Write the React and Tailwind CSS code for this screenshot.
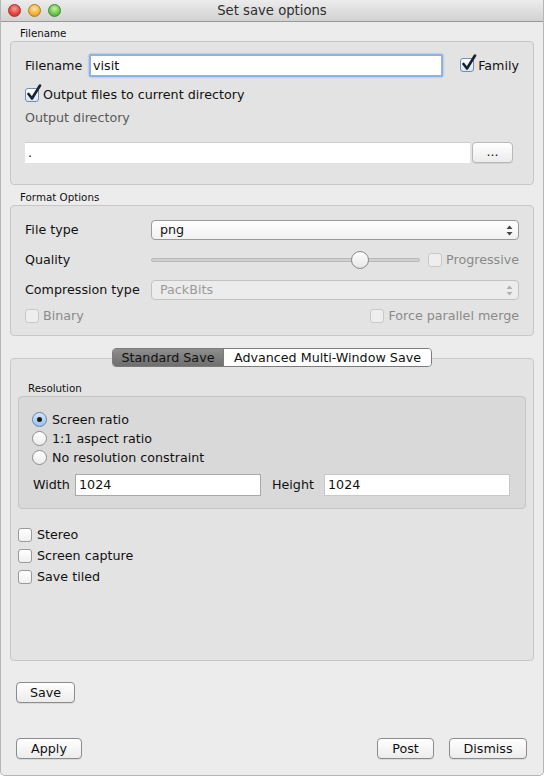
import React from 'react';

const font = { fontFamily: '"DejaVu Sans", "Liberation Sans", sans-serif' };

function Light({ color, ring }) {
  return (
    <span
      className="inline-block w-[13px] h-[13px] rounded-full border"
      style={{ background: color, borderColor: ring }}
    />
  );
}

function Check({ checked, disabled }) {
  return (
    <span className="relative inline-block w-[14px] h-[14px] shrink-0">
      <span
        className={`absolute inset-0 rounded-[3px] border ${
          disabled
            ? 'border-[#c8c8c8] bg-[#eeeeee]'
            : checked
            ? 'border-[#6f8fb8] bg-gradient-to-b from-[#ffffff] to-[#d9e6f5]'
            : 'border-[#9a9a9a] bg-gradient-to-b from-[#ffffff] to-[#f0f0f0]'
        }`}
      />
      {checked && (
        <svg className="absolute left-[1px] top-[-4px]" width="16" height="17" viewBox="0 0 16 17">
          <path d="M2.5 10 L6 14.5 L14 1.5" fill="none" stroke="#1a2230" strokeWidth="2.6" strokeLinecap="round" strokeLinejoin="round" />
        </svg>
      )}
    </span>
  );
}

function Radio({ checked }) {
  return (
    <span
      className={`relative inline-flex items-center justify-center w-[15px] h-[15px] rounded-full border shrink-0 ${
        checked
          ? 'border-[#5f86b8] bg-gradient-to-b from-[#d3e5f8] to-[#9cc2ec]'
          : 'border-[#8e8e8e] bg-gradient-to-b from-[#ffffff] to-[#ececec]'
      }`}
    >
      {checked && <span className="w-[5px] h-[5px] rounded-full bg-[#1b1b1b]" />}
    </span>
  );
}

function Arrows({ dim }) {
  const c = dim ? '#b0b0b0' : '#444';
  return (
    <svg width="7" height="11" viewBox="0 0 7 11">
      <path d="M3.5 0.5 L6.5 4 L0.5 4 Z" fill={c} />
      <path d="M3.5 10.5 L6.5 7 L0.5 7 Z" fill={c} />
    </svg>
  );
}

function Button({ children, className = '' }) {
  return (
    <div
      className={`h-[21px] flex items-center justify-center rounded-[4px] border border-[#8c8c8c] bg-gradient-to-b from-[#ffffff] to-[#ececec] text-[12.7px] text-[#111] shadow-[0_1px_0_rgba(0,0,0,0.08)] ${className}`}
    >
      {children}
    </div>
  );
}

function GroupLabel({ children, className = '' }) {
  return <div className={`h-[14px] flex items-center text-[10.3px] text-[#111] ${className}`}>{children}</div>;
}

export default function App() {
  return (
    <div style={font} className="w-[544px] h-[776px] bg-[#ececec] flex flex-col overflow-hidden rounded-b-[5px] border-x border-b border-[#b5b5b5]">
      {/* title bar */}
      <div className="relative h-[22px] shrink-0 flex items-center justify-center bg-gradient-to-b from-[#ececec] to-[#d2d2d2] border-b border-[#9a9a9a] rounded-t-[5px]">
        <div className="absolute left-[7px] top-[4px] flex gap-[7px]">
          <Light color="radial-gradient(circle at 50% 35%, #ff9a94, #e0443e 60%, #b8302b)" ring="#a8332d" />
          <Light color="radial-gradient(circle at 50% 35%, #ffe3a0, #f2b03a 60%, #c98a1e)" ring="#b07c22" />
          <Light color="radial-gradient(circle at 50% 35%, #c4f2a6, #69c34a 60%, #3f9330)" ring="#3e8a2f" />
        </div>
        <span className="text-[13.2px] text-[#2e2e2e]">Set save options</span>
      </div>

      <div className="flex flex-col px-[9px]">
        {/* Filename group */}
        <GroupLabel className="mt-[5px] pl-[10px]">Filename</GroupLabel>
        <div className="h-[144px] rounded-[4px] border border-[#c7c7c7] bg-[#e3e3e3] px-[14px] pt-[12px] flex flex-col">
          <div className="h-[23px] flex items-center">
            <span className="w-[64px] text-[12.7px] text-[#111]">Filename</span>
            <div className="w-[354px] h-[23px] rounded-[2px] border-2 border-[#8db2e3] bg-white flex items-center pl-[2px] text-[12.7px] text-[#111] shadow-[0_0_2px_#6d9bd8]">
              visit
            </div>
            <div className="ml-auto flex items-center gap-[4px]">
              <Check checked />
              <span className="text-[12.7px] text-[#111]">Family</span>
            </div>
          </div>
          <div className="h-[18px] mt-[9px] flex items-center gap-[4px]">
            <Check checked />
            <span className="text-[12.7px] text-[#111]">Output files to current directory</span>
          </div>
          <div className="h-[18px] mt-[5px] flex items-center text-[12.7px] text-[#5a5a5a]">Output directory</div>
          <div className="h-[22px] mt-[14px] flex items-center">
            <div className="w-[445px] h-[21px] bg-white border-t border-[#cfcfcf] flex items-center pl-[3px] text-[12.7px] text-[#111]">.</div>
            <Button className="ml-[2px] w-[41px] text-[#7a8aa0] border-[#b8b8b8]">...</Button>
          </div>
        </div>

        {/* Format Options */}
        <GroupLabel className="mt-[6px] pl-[10px]">Format Options</GroupLabel>
        <div className="h-[131px] rounded-[4px] border border-[#c7c7c7] bg-[#e3e3e3] pl-[14px] pr-[14px] pt-[14px] flex flex-col">
          <div className="h-[20px] flex items-center">
            <span className="w-[126px] text-[12.7px] text-[#111]">File type</span>
            <div className="flex-1 h-[20px] rounded-[4px] border border-[#9a9a9a] bg-gradient-to-b from-[#ffffff] to-[#f1f1f1] flex items-center justify-between pl-[8px] pr-[5px] text-[12.7px] text-[#111]">
              <span>png</span>
              <Arrows />
            </div>
          </div>
          <div className="h-[20px] mt-[10px] flex items-center">
            <span className="w-[126px] text-[12.7px] text-[#111]">Quality</span>
            <div className="relative w-[269px] h-[20px] flex items-center">
              <div className="w-full h-[4px] rounded-full bg-[#d0d0d0] border border-[#b9b9b9]" />
              <span className="absolute left-[200px] top-[1px] w-[18px] h-[18px] rounded-full border border-[#8a8a8a] bg-gradient-to-b from-[#ffffff] to-[#e6e6e6]" />
            </div>
            <div className="ml-auto flex items-center gap-[4px]">
              <Check disabled />
              <span className="text-[12.7px] text-[#8a8a8a]">Progressive</span>
            </div>
          </div>
          <div className="h-[20px] mt-[10px] flex items-center">
            <span className="w-[126px] text-[12.7px] text-[#111]">Compression type</span>
            <div className="flex-1 h-[20px] rounded-[4px] border border-[#c2c2c2] bg-[#ececec] flex items-center justify-between pl-[8px] pr-[5px] text-[12.7px] text-[#9a9a9a]">
              <span>PackBits</span>
              <Arrows dim />
            </div>
          </div>
          <div className="h-[18px] mt-[7px] flex items-center">
            <div className="flex items-center gap-[4px]">
              <Check disabled />
              <span className="text-[12.7px] text-[#8a8a8a]">Binary</span>
            </div>
            <div className="ml-auto flex items-center gap-[4px]">
              <Check disabled />
              <span className="text-[12.7px] text-[#8a8a8a]">Force parallel merge</span>
            </div>
          </div>
        </div>

        {/* Tabs */}
        <div className="relative mt-[12px] pt-[10px]">
          <div className="absolute left-0 right-0 top-0 flex justify-center z-10">
            <div className="flex h-[19px] rounded-[4px] border border-[#7c7c7c] overflow-hidden text-[12.7px]">
              <div className="w-[110px] flex items-center justify-center bg-gradient-to-b from-[#8e8e8e] to-[#6e6e6e] text-[#111]">Standard Save</div>
              <div className="w-[208px] flex items-center justify-center bg-white border-l border-[#7c7c7c] text-[#111]">Advanced Multi-Window Save</div>
            </div>
          </div>
          <div className="h-[303px] rounded-[4px] border border-[#c7c7c7] bg-[#e3e3e3] px-[7px] pt-[23px] flex flex-col">
            <GroupLabel className="pl-[10px]">Resolution</GroupLabel>
            <div className="h-[113px] rounded-[4px] border border-[#c4c4c4] bg-[#d9d9d9] pl-[13px] pr-[15px] pt-[13px] flex flex-col">
              <div className="h-[19px] flex items-center gap-[5px]">
                <Radio checked />
                <span className="text-[12.7px] text-[#111]">Screen ratio</span>
              </div>
              <div className="h-[19px] flex items-center gap-[5px]">
                <Radio />
                <span className="text-[12.7px] text-[#111]">1:1 aspect ratio</span>
              </div>
              <div className="h-[19px] flex items-center gap-[5px]">
                <Radio />
                <span className="text-[12.7px] text-[#111]">No resolution constraint</span>
              </div>
              <div className="h-[22px] mt-[7px] flex items-center">
                <span className="w-[43px] pl-[1px] text-[12.7px] text-[#111]">Width</span>
                <div className="w-[186px] h-[22px] bg-white border border-[#a8a8a8] flex items-center pl-[3px] text-[12.7px] text-[#111]">1024</div>
                <span className="ml-[11px] w-[52px] text-[12.7px] text-[#111]">Height</span>
                <div className="flex-1 h-[22px] bg-white border border-[#c8c8c8] flex items-center pl-[3px] text-[12.7px] text-[#111]">1024</div>
              </div>
            </div>
            <div className="mt-[15px] flex flex-col">
              {['Stereo', 'Screen capture', 'Save tiled'].map((t) => (
                <div key={t} className="h-[21px] flex items-center gap-[5px]">
                  <Check />
                  <span className="text-[12.7px] text-[#111]">{t}</span>
                </div>
              ))}
            </div>
          </div>
        </div>

        <div className="mt-[21px] pl-[6px]">
          <Button className="w-[59px]">Save</Button>
        </div>

        <div className="mt-[35px] flex items-center pl-[6px] pr-[7px]">
          <Button className="w-[66px]">Apply</Button>
          <Button className="ml-auto w-[57px]">Post</Button>
          <Button className="ml-[15px] w-[78px]">Dismiss</Button>
        </div>
      </div>
    </div>
  );
}
